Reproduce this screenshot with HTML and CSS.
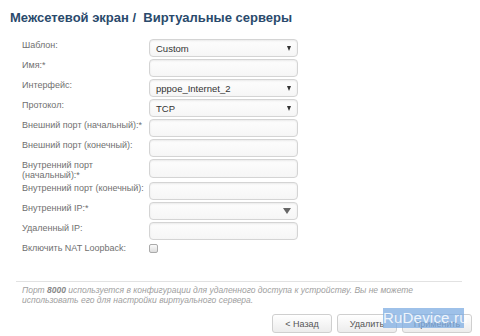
FILE: index.html
```html
<!DOCTYPE html>
<html lang="ru">
<head>
  <meta charset="UTF-8" />
  <title>Виртуальные серверы</title>
  <link rel="stylesheet" href="styles.css">
</head>
<body>
  <div class="page">
    <h1 class="title">Межсетевой экран /&nbsp; Виртуальные серверы</h1>

    <div class="form">
      <div class="row">
        <label>Шаблон:</label>
        <div class="field select"><span>Custom</span><i class="arrow"></i></div>
      </div>
      <div class="row">
        <label>Имя:*</label>
        <div class="field"></div>
      </div>
      <div class="row">
        <label>Интерфейс:</label>
        <div class="field select"><span>pppoe_Internet_2</span><i class="arrow"></i></div>
      </div>
      <div class="row">
        <label>Протокол:</label>
        <div class="field select"><span>TCP</span><i class="arrow"></i></div>
      </div>
      <div class="row">
        <label>Внешний порт (начальный):*</label>
        <div class="field"></div>
      </div>
      <div class="row">
        <label>Внешний порт (конечный):</label>
        <div class="field"></div>
      </div>
      <div class="row tall">
        <label>Внутренний порт<br>(начальный):*</label>
        <div class="field high"></div>
      </div>
      <div class="row">
        <label>Внутренний порт (конечный):</label>
        <div class="field"></div>
      </div>
      <div class="row">
        <label>Внутренний IP:*</label>
        <div class="field select"><span></span><i class="arrow big"></i></div>
      </div>
      <div class="row">
        <label>Удаленный IP:</label>
        <div class="field"></div>
      </div>
      <div class="row check-row">
        <label>Включить NAT Loopback:</label>
        <div class="checkbox"></div>
      </div>
    </div>

    <div class="divider"></div>

    <p class="note">Порт <b>8000</b> используется в конфигурации для удаленного доступа к устройству. Вы не можете<br>использовать его для настройки виртуального сервера.</p>

    <div class="actions">
      <button>&lt; Назад</button>
      <button>Удалить</button>
      <button class="wide">Применить</button>
      <div class="watermark">RuDevice.ru</div>
    </div>
  </div>
</body>
</html>
```

FILE: styles.css
```css
* {
  box-sizing: border-box;
}

body {
  margin: 0;
  background: #fff;
  font-family: "Liberation Sans", Arial, sans-serif;
}

.page {
  padding-top: 10px;
}

.title {
  margin: 0 0 13px 10px;
  font-size: 13px;
  line-height: 16px;
  font-weight: bold;
  color: #2a4a6c;
}

.form {
  margin-left: 22px;
}

.row {
  display: flex;
  align-items: flex-start;
  min-height: 20px;
}

.row.tall {
  min-height: 23px;
}

.row label {
  width: 127px;
  padding-top: 1px;
  font-size: 9px;
  line-height: 10px;
  color: #707070;
}

.field {
  position: relative;
  display: flex;
  align-items: center;
  width: 149px;
  height: 18px;
  padding: 0 6px;
  border: 1px solid #d4d4d4;
  border-radius: 4px;
  background: linear-gradient(#fdfdfd, #f6f6f6);
  box-shadow: inset 0 1px 2px rgba(0, 0, 0, 0.08);
  font-size: 9.5px;
  color: #333;
}

.field.high {
  height: 19px;
}

.field.select span {
  flex: 1;
}

.arrow {
  width: 0;
  height: 0;
  border-left: 2.5px solid transparent;
  border-right: 2.5px solid transparent;
  border-top: 5px solid #333;
}

.arrow.big {
  border-left-width: 4px;
  border-right-width: 4px;
  border-top: 6px solid #666;
}

.check-row {
  min-height: 14px;
}

.checkbox {
  width: 9px;
  height: 9px;
  margin-top: 2px;
  border: 1px solid #aaa;
  border-radius: 2px;
  background: linear-gradient(#fafafa, #dcdcdc);
}

.divider {
  margin: 25px 0 0 16px;
  width: 446px;
  border-top: 1px solid #e2e2e2;
}

.note {
  margin: 3px 0 0 22px;
  font-size: 8.5px;
  line-height: 10px;
  font-style: italic;
  color: #a0a0a0;
}

.note b {
  color: #888;
}

.actions {
  position: relative;
  display: flex;
  justify-content: flex-end;
  gap: 5px;
  margin-top: 9px;
  padding-right: 8px;
}

.actions button {
  width: 60px;
  height: 19px;
  border: 1px solid #cfcfcf;
  border-radius: 3px;
  background: linear-gradient(#fff, #ececec);
  font-family: "Liberation Sans", Arial, sans-serif;
  font-size: 9px;
  color: #555;
}

.actions button.wide {
  width: 70px;
}

.watermark {
  position: absolute;
  left: 383px;
  top: -6px;
  width: 81px;
  height: 20px;
  background: rgba(125, 172, 226, 0.75);
  color: rgba(255, 255, 255, 0.85);
  font-size: 15px;
  line-height: 20px;
  text-align: center;
  letter-spacing: 0.2px;
}
```
